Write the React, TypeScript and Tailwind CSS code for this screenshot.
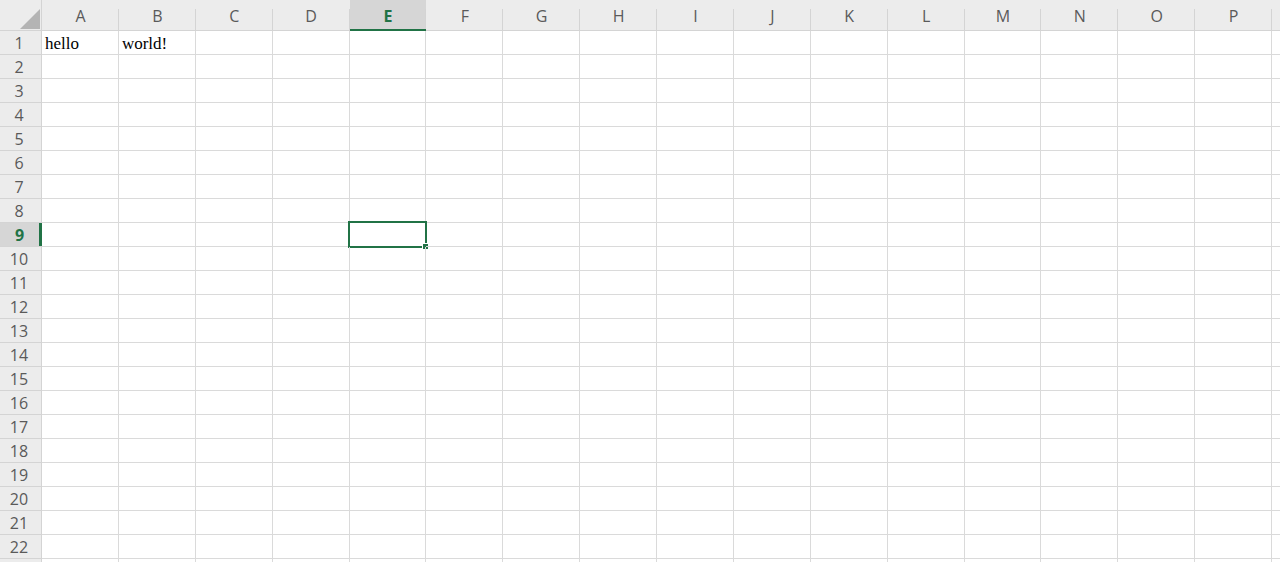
import { Fragment } from 'react'

const COLS = ['A', 'B', 'C', 'D', 'E', 'F', 'G', 'H', 'I', 'J', 'K', 'L', 'M', 'N', 'O', 'P']
const ROWS = Array.from({ length: 22 }, (_, i) => i + 1)

const DATA: Record<string, string> = {
  A1: 'hello',
  B1: 'world!',
}

const ACTIVE_COL = 'E'
const ACTIVE_ROW = 9

export default function App() {
  return (
    <div className="w-[1280px] h-[562px] overflow-hidden bg-white font-['Open_Sans','Liberation_Sans',sans-serif]">
      <div className="grid grid-cols-[42px_repeat(16,76.875px)_1fr] grid-rows-[31px_repeat(23,24px)]">
        {/* header row */}
        <div className="relative bg-[#ececec] border-r border-b border-[#d4d4d4]">
          <svg className="absolute left-[20px] top-[9px]" width="20" height="20" viewBox="0 0 20 20">
            <path d="M20 0 L20 20 L0 20 Z" fill="#b4b4b4" />
          </svg>
        </div>
        {COLS.map((c) => {
          const active = c === ACTIVE_COL
          return (
            <div
              key={c}
              className={
                active
                  ? 'relative flex items-center justify-center bg-[#d6d6d6] border-b-2 border-[#217346] text-[16px] font-bold text-[#217346]'
                  : 'relative flex items-center justify-center bg-[#ececec] border-b border-[#d4d4d4] text-[16px] text-[#5a5a5a]'
              }
            >
              <span className="pt-[2px]">{c}</span>
              <span className="absolute right-0 top-[9px] bottom-0 w-px bg-[#d4d4d4]" />
            </div>
          )
        })}
        <div className="bg-[#ececec] border-b border-[#d4d4d4]" />

        {ROWS.map((r) => {
          const activeRow = r === ACTIVE_ROW
          return (
            <Fragment key={r}>
              <div
                className={
                  activeRow
                    ? 'relative flex items-center justify-center bg-[#d6d6d6] border-b border-[#d4d4d4] text-[16px] font-bold text-[#217346]'
                    : 'flex items-center justify-center bg-[#ececec] border-r border-b border-[#d4d4d4] text-[16px] text-[#5a5a5a]'
                }
              >
                <span className="pr-[3px]">{r}</span>
                {activeRow && <span className="absolute right-0 top-0 bottom-0 w-[3px] bg-[#217346]" />}
              </div>
              {COLS.map((c) => {
                const id = `${c}${r}`
                const selected = c === ACTIVE_COL && activeRow
                return (
                  <div
                    key={id}
                    className="relative border-r border-b border-[#dadada] text-[17px] text-black font-['Liberation_Serif','Times_New_Roman',serif] leading-[26px] pl-[3px] whitespace-nowrap"
                  >
                    {DATA[id]}
                    {selected && (
                      <>
                        <span className="absolute -left-[2px] -top-[2px] -right-[2px] -bottom-[2px] border-2 border-[#217346]" />
                        <span className="absolute -right-[4px] -bottom-[4px] w-[7px] h-[7px] bg-[#217346] border border-white" />
                      </>
                    )}
                  </div>
                )
              })}
              <div className="border-b border-[#dadada]" />
            </Fragment>
          )
        })}
        {/* partial row below the fold */}
        <div className="bg-[#ececec] border-r border-[#d4d4d4]" />
        {COLS.map((c) => (
          <div key={`${c}-tail`} className="border-r border-[#dadada]" />
        ))}
        <div />
      </div>
    </div>
  )
}
